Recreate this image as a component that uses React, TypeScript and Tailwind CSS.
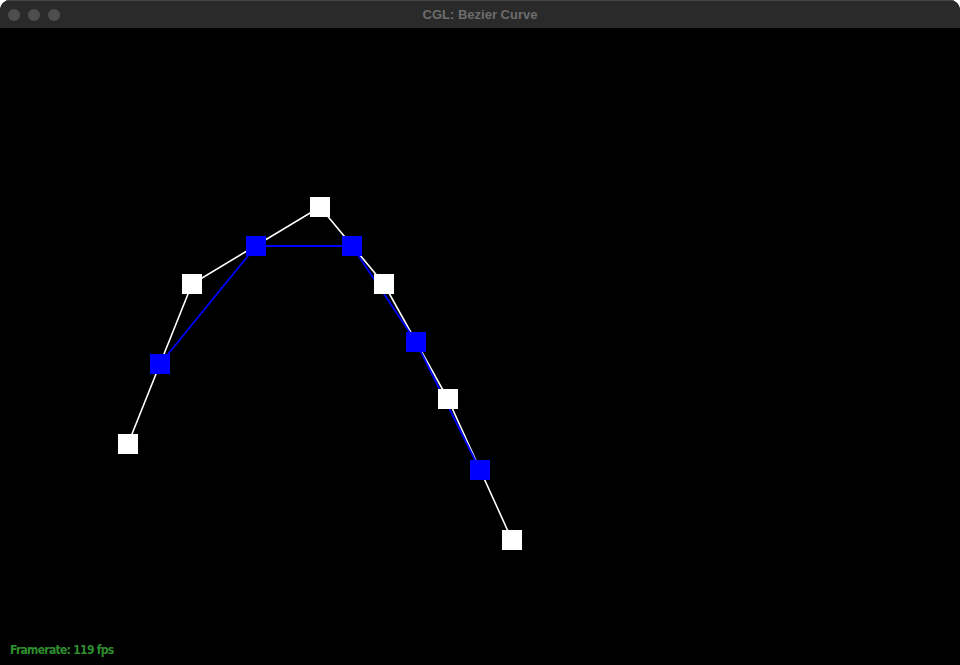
const whitePts: [number, number][] = [
  [128, 444],
  [192, 284],
  [320, 207],
  [384, 284],
  [448, 399],
  [512, 540],
];

const bluePts: [number, number][] = [
  [160, 364],
  [256, 246],
  [352, 246],
  [416, 342],
  [480, 470],
];

const toPath = (pts: [number, number][]) => pts.map((p) => p.join(",")).join(" ");

function TitleBar() {
  return (
    <div className="relative flex h-[28px] items-center border-t border-[#474747] bg-[#2a2a2a] px-[8px]">
      <div className="flex gap-[8px]">
        <span className="h-[12px] w-[12px] rounded-full bg-[#4e4e4e]" />
        <span className="h-[12px] w-[12px] rounded-full bg-[#4e4e4e]" />
        <span className="h-[12px] w-[12px] rounded-full bg-[#4e4e4e]" />
      </div>
      <div className="pointer-events-none absolute inset-0 flex items-center justify-center">
        <span className="font-['Liberation_Sans',Arial,sans-serif] text-[13px] font-bold text-[#6d6d6d]">
          CGL: Bezier Curve
        </span>
      </div>
    </div>
  );
}

function Canvas() {
  return (
    <div className="relative flex-1 bg-black">
      <svg className="block h-full w-full" viewBox="0 28 960 637">
        <polyline points={toPath(whitePts)} fill="none" stroke="#ffffff" strokeWidth={1.6} />
        <polyline points={toPath(bluePts)} fill="none" stroke="#0000ff" strokeWidth={1.8} />
        {whitePts.map(([x, y], i) => (
          <rect key={"w" + i} x={x - 10} y={y - 10} width={20} height={20} fill="#ffffff" />
        ))}
        {bluePts.map(([x, y], i) => (
          <rect key={"b" + i} x={x - 10} y={y - 10} width={20} height={20} fill="#0000ff" />
        ))}
      </svg>
      {/* fps overlay */}
      <span className="absolute bottom-[6px] left-[10px] font-['DejaVu_Sans_Condensed','DejaVu_Sans',sans-serif] font-stretch-condensed text-[12px] font-bold tracking-[-0.7px] text-[#2f8f2f]">
        Framerate: 119 fps
      </span>
    </div>
  );
}

export default function App() {
  return (
    <div className="flex h-[665px] w-[960px] flex-col overflow-hidden rounded-t-[10px] bg-black">
      <TitleBar />
      <Canvas />
    </div>
  );
}
